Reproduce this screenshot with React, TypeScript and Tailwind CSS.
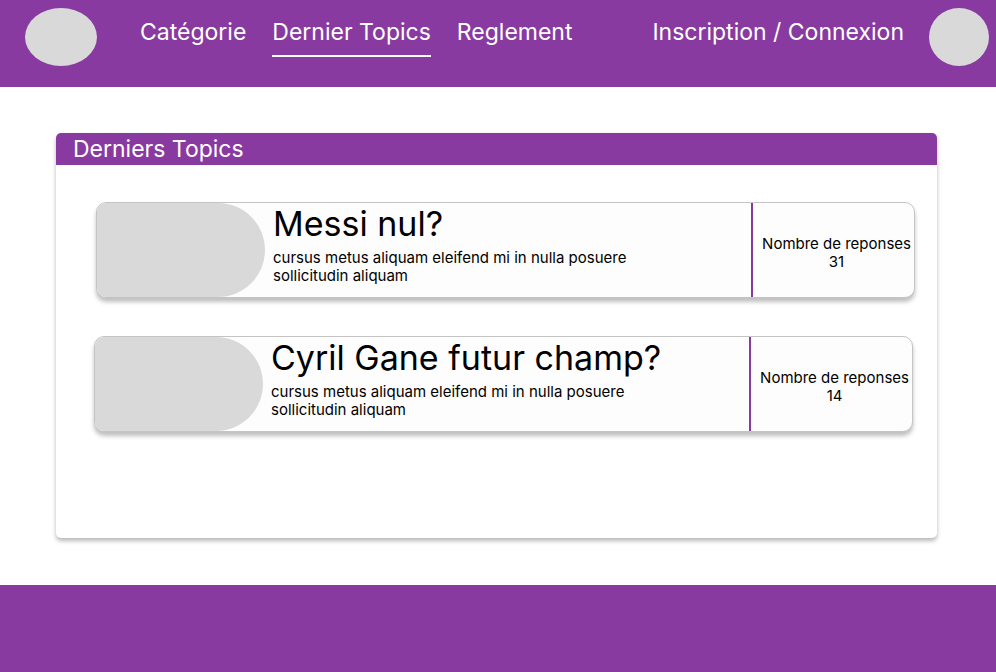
type Topic = { title: string; excerpt: string; replies: number; shift: string };

const topics: Topic[] = [
  {
    title: 'Messi nul?',
    excerpt: 'cursus metus aliquam eleifend mi in nulla posuere sollicitudin aliquam',
    replies: 31,
    shift: 'ml-10 mr-[22px]',
  },
  {
    title: 'Cyril Gane futur champ?',
    excerpt: 'cursus metus aliquam eleifend mi in nulla posuere sollicitudin aliquam',
    replies: 14,
    shift: 'ml-[38px] mr-6',
  },
];

function TopicRow({ title, excerpt, replies, shift }: Topic) {
  return (
    <li className={`flex h-24 overflow-hidden rounded-[10px] border border-[#c4c4c4] bg-[#fdfdfd] shadow-[0_4px_4px_rgba(0,0,0,0.25)] ${shift}`}>
      <div className="w-[168px] shrink-0 rounded-r-full bg-[#d9d9d9]" />
      <div className="min-w-0 flex-1 pl-2">
        <h2 className="text-[34px] leading-[42px]">{title}</h2>
        <p className="mt-1 max-w-[400px] text-[15px] leading-[18px]">{excerpt}</p>
      </div>
      <div className="flex w-[163px] shrink-0 items-center justify-end border-l-2 border-[#883aa1] pt-[6px] pr-[3px]">
        <p className="text-center text-[15px] leading-[18px] whitespace-nowrap">
          Nombre de reponses
          <br />
          {replies}
        </p>
      </div>
    </li>
  );
}

export default function App() {
  return (
    <div className="flex min-h-screen flex-col bg-white font-['Inter',sans-serif] text-black">
      <header className="flex h-[87px] items-start bg-[#883aa1] pt-2 pr-[7px] pl-[25px] text-[23px] leading-7 text-white">
        <div className="h-[58px] w-[72px] shrink-0 rounded-[50%] bg-[#d9d9d9]" />
        <nav className="ml-[43px] flex gap-[26px] pt-[10px] whitespace-nowrap">
          <a href="#categorie">Catégorie</a>
          <a href="#topics" className="border-b-2 border-white pb-[9px]">
            Dernier Topics
          </a>
          <a href="#reglement">Reglement</a>
        </nav>
        <a href="#connexion" className="mr-[25px] ml-auto pt-[10px] whitespace-nowrap">
          Inscription / Connexion
        </a>
        <div className="h-[58px] w-[60px] shrink-0 rounded-[50%] bg-[#d9d9d9]" />
      </header>

      <main className="flex-1 pt-[46px] pr-[59px] pb-[47px] pl-14">
        <section className="min-h-[405px] overflow-hidden rounded-[5px] bg-white shadow-[0_3px_4px_rgba(0,0,0,0.28)]">
          <h1 className="h-8 bg-[#883aa1] pl-[17px] text-[23px] leading-8 text-white">Derniers Topics</h1>
          <ul className="flex flex-col gap-[38px] pt-[37px]">
            {topics.map((topic) => (
              <TopicRow key={topic.title} {...topic} />
            ))}
          </ul>
        </section>
      </main>

      <footer className="h-[87px] bg-[#883aa1]" />
    </div>
  );
}
